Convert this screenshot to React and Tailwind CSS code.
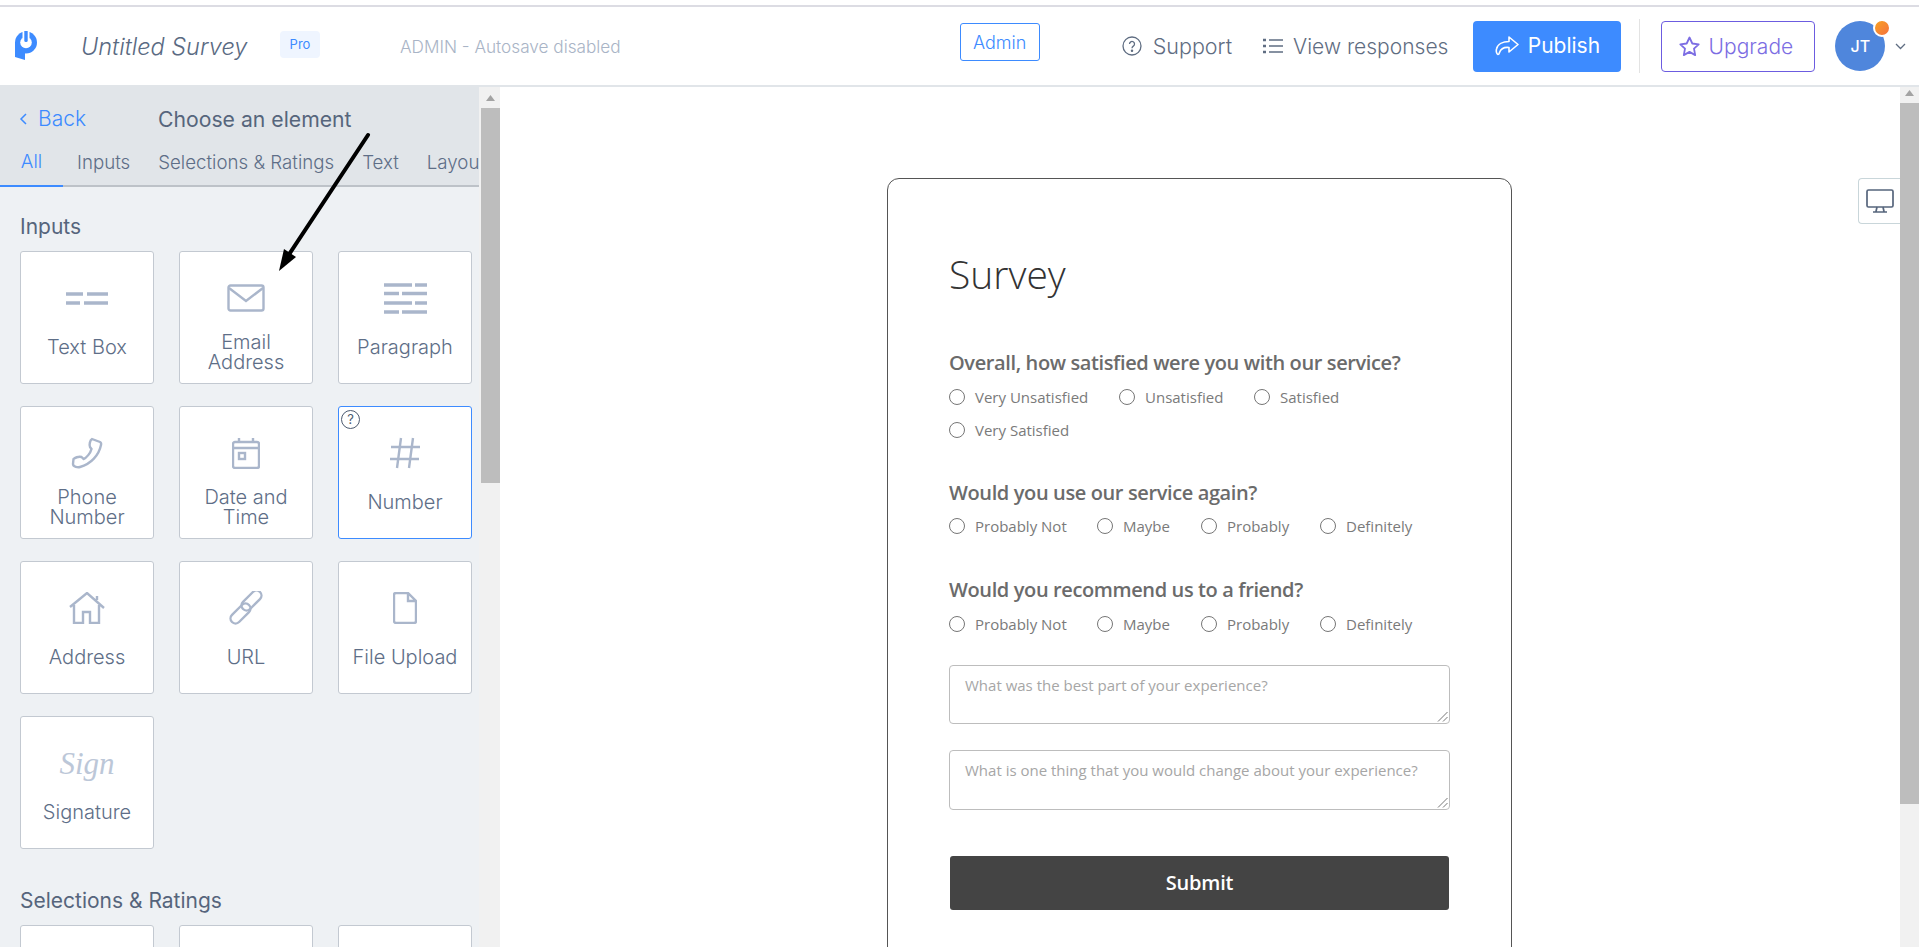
import React from "react";

const UI = "font-['Inter',sans-serif]";
const FORM = "font-['Open_Sans',sans-serif]";

const S = ({ w = 40, h = 40, vb = "0 0 40 40", children, className = "text-[#aab6cb]", sw = 2.400 }) => (
  <svg width={w} height={h} viewBox={vb} fill="none" stroke="currentColor" strokeWidth={sw} className={className}>{children}</svg>
);

const icons = {
  text: (
    <S vb="0 0 42 13" w={42} h={13} sw={3.400}>
      <path d="M0 2h17M21 2h21M0 11h14M18 11h24" />
    </S>
  ),
  email: (
    <S w={38} h={28} vb="0 0 38 28">
      <rect x="1.500" y="1.500" width="35" height="25" rx="2" />
      <path d="M2 4l17 13L36 4" />
    </S>
  ),
  para: (
    <S w={43} h={31} vb="0 0 43 31" sw={3.400}>
      <path d="M0 2h28M31 2h12M0 10.500h15M18 10.500h25M0 20h28M31 20h12M0 29h15M18 29h25" />
    </S>
  ),
  phone: (
    <S w={32} h={32} vb="0 0 32 32">
      <path d="M21 2l8 3c1 .5 1.500 1 1 3-2 10-10 19-21 22-2 .5-7 0-7-3l.500-5c1-1 5-3 8-2l2 2c3-1 7-6 8-10l-1.500-2c-1-2 0-7 2-8z" />
    </S>
  ),
  date: (
    <S w={28} h={32} vb="0 0 28 32">
      <rect x="1" y="5" width="26" height="26" rx="2" />
      <path d="M1 11h26M7 1v5M21 1v5" />
      <rect x="7" y="16" width="6" height="6" />
    </S>
  ),
  number: (
    <S w={32} h={32} vb="0 0 32 32">
      <path d="M12 1L8 31M24 1l-4 30M2 10h29M1 22h29" />
    </S>
  ),
  address: (
    <S w={36} h={32} vb="0 0 36 32">
      <path d="M1 15L18 1l17 15M5 13v18h9V20h7v11h9V13M28 8V4" />
    </S>
  ),
  url: (
    <S w={34} h={34} vb="0 0 34 34">
      <rect x="17.500" y="-2.500" width="10" height="24" rx="5" transform="rotate(45 22.500 9.500)" />
      <rect x="6.500" y="10.500" width="10" height="24" rx="5" transform="rotate(45 11.500 22.500)" />
    </S>
  ),
  file: (
    <S w={24} h={32} vb="0 0 24 32">
      <path d="M1 3a2 2 0 0 1 2-2h12l8 8v20a2 2 0 0 1-2 2H3a2 2 0 0 1-2-2zM15 1v8h8" />
    </S>
  ),
  sign: <span className="font-['Liberation_Serif',serif] italic text-[31px] leading-none text-[#bcc7d8]">Sign</span>,
};

function Card({ icon, label, active }) {
  const two = label && label.includes("\n");
  return (
    <div
      className={`relative h-[133px] rounded-[3px] border bg-white flex flex-col items-center ${
        active ? "border-[#3d8bff]" : "border-[#c3c9d1]"
      }`}
    >
      {active && (
        <span className="absolute left-[2px] top-[3px] w-[19px] h-[19px] rounded-full border border-[#4c5a70] flex items-center justify-center text-[13px] leading-none text-[#4c5a70]">
          ?
        </span>
      )}
      <div className="h-[76px] w-full flex items-end justify-center shrink-0 pb-[10px]">
        <div className="h-[40px] flex items-center justify-center">{icon}</div>
      </div>
      <div className="flex-1 flex items-start justify-center w-full">
        <div className={`text-center text-[20px] leading-[20px] font-light text-[#5e6e87] whitespace-pre-line ${two ? "mt-[4px]" : "mt-[9px]"}`}>
          {label}
        </div>
      </div>
    </div>
  );
}

function Radio({ label, cls = "" }) {
  return (
    <label className={`flex items-center ${cls}`}>
      <span className="w-[16px] h-[16px] rounded-full border border-[#767676] bg-white mr-[10px] shrink-0" />
      <span className="text-[15px] leading-[20px] text-[#7a7a7a] whitespace-nowrap">{label}</span>
    </label>
  );
}

function Question({ q, className = "", children }) {
  return (
    <div className={className}>
      <div className="text-[20px] leading-[28px] font-semibold text-[#6b6b6b] tracking-[-0.38px]">{q}</div>
      {children}
    </div>
  );
}

function Area({ placeholder, className = "" }) {
  return (
    <div className={`relative rounded-[4px] border border-[#bdbdbd] bg-white px-[15px] pt-[7px] ${className}`}>
      <span className="text-[15px] leading-[20px] text-[#a6a6a6] whitespace-nowrap">{placeholder}</span>
      <svg width="11" height="11" viewBox="0 0 11 11" className="absolute right-[1px] bottom-[1px]" stroke="#777" strokeWidth="1" fill="none">
        <path d="M1 10.500L10.500 1M6 10.500L10.500 6" />
      </svg>
    </div>
  );
}

function Scrollbar({ className = "", arrowClass, thumbClass }) {
  return (
    <div className={`shrink-0 bg-[#f1f1f1] flex flex-col items-center ${className}`}>
      <svg width="9" height="6" viewBox="0 0 9 6" className={`mb-[7px] shrink-0 ${arrowClass}`}>
        <path d="M4.500 0L9 6H0z" fill="#a3a3a3" />
      </svg>
      <div className={`w-full bg-[#bdbdbd] ${thumbClass}`} />
    </div>
  );
}

export default function App() {
  return (
    <div className={`relative h-[947px] w-full overflow-hidden bg-white flex flex-col ${UI}`}>
      <div className="h-[7px] shrink-0 bg-white border-b-2 border-[#dcdce3]" />
      <header className="h-[80px] shrink-0 border-b-2 border-[#e1e5e9] bg-white flex items-center pl-[15px]">
        <svg width="22" height="30" viewBox="0 0 22 30" className="shrink-0 -mt-[1px]">
          <path d="M0 11h10v18L0 26z" fill="#3d8bff" />
          <circle cx="11" cy="11.500" r="11" fill="#3d8bff" />
          <circle cx="11" cy="11.500" r="5.800" fill="#fff" />
          <rect x="7.500" y="-1" width="7" height="8" fill="#fff" />
          <rect x="9.300" y="-1" width="3.400" height="12" rx="1.500" fill="#3d8bff" />
        </svg>
        <div className="ml-[44px] mt-[2px] w-[199px] text-[23.500px] font-light italic text-[#5a6a82] whitespace-nowrap">Untitled Survey</div>
        <div className="w-[40px] h-[27px] rounded-[4px] bg-[#eff5ff] text-[#3d8bff] text-[13px] flex items-center justify-center -mt-[3px]">Pro</div>
        <div className="ml-[80px] mt-[1px] text-[17.200px] font-light text-[#a9b4c6] whitespace-nowrap">ADMIN - Autosave disabled</div>
        <div className="ml-[339px] w-[80px] h-[38px] rounded-[3px] border border-[#3d8bff] text-[#3d8bff] text-[18px] font-light flex items-center justify-center -mt-[8px]">Admin</div>
        <svg width="20" height="20" viewBox="0 0 20 20" className="ml-[82px] shrink-0 text-[#5f6d82]" fill="none" stroke="currentColor" strokeWidth="1.300">
          <circle cx="10" cy="10" r="9" />
          <path d="M7.500 8a2.500 2.500 0 1 1 3.800 2.100c-.9.600-1.300 1-1.300 2.100" />
          <circle cx="10" cy="14.800" r=".6" fill="currentColor" />
        </svg>
        <span className="ml-[11px] mt-[1px] text-[21.500px] font-light text-[#5f6d82]">Support</span>
        <svg width="20" height="16" viewBox="0 0 20 16" className="ml-[31px] shrink-0 text-[#5f6d82]" fill="none" stroke="currentColor" strokeWidth="1.500">
          <path d="M6 2h14M6 8h14M6 14h14" />
          <path d="M0 2h3M0 8h3M0 14h3" strokeWidth="2.500" />
        </svg>
        <span className="ml-[10px] mt-[1px] text-[21px] font-light text-[#5f6d82] whitespace-nowrap">View responses</span>
        <div className="ml-[25px] w-[148px] h-[51px] rounded-[4px] bg-[#3d8bff] text-white text-[21px] flex items-center justify-center gap-[9px]">
          <svg width="24" height="20" viewBox="0 0 24 20" fill="none" stroke="currentColor" strokeWidth="1.600" strokeLinejoin="round">
            <path d="M14 1l9 7.500-9 7.500v-4.500c-5-.5-8 .5-9.500 5-.3 1-.5 2-1.500 2C1.500 18 1 15 1.500 13 2.500 8 8 5.500 14 5.500z" />
          </svg>
          Publish
        </div>
        <div className="ml-[18px] w-px h-[54px] bg-[#e3e3e3]" />
        <div className="ml-[21px] w-[154px] h-[51px] rounded-[4px] border border-[#6c5ce0] text-[#7c6de3] text-[21px] font-light flex items-center justify-center gap-[9px] pt-[1px] pr-[5px]">
          <svg width="21" height="21" viewBox="0 0 21 21" fill="none" stroke="currentColor" strokeWidth="1.800" strokeLinejoin="round">
            <path d="M10.500 1.500l2.800 6 6.400.8-4.700 4.400 1.200 6.400-5.700-3.200-5.700 3.200 1.200-6.400L1.300 8.300l6.400-.8z" />
          </svg>
          Upgrade
        </div>
        <div className="relative ml-[20px] w-[50px] h-[50px] rounded-full bg-[#4f86dc] text-white text-[16px] font-medium flex items-center justify-center">
          JT
          <span className="absolute -right-[6px] -top-[2px] w-[18px] h-[18px] rounded-full border-2 border-white bg-gradient-to-br from-[#f7a11e] to-[#f5703c]" />
        </div>
        <svg width="11" height="7" viewBox="0 0 11 7" className="ml-[10px] text-[#5f6d82]" fill="none" stroke="currentColor" strokeWidth="1.300">
          <path d="M1 1l4.500 4.500L10 1" />
        </svg>
      </header>

      <div className="flex-1 flex min-h-0">
        <aside className="w-[500px] shrink-0 flex bg-[#f1f1f1] overflow-hidden">
          <div className="w-[479px] shrink-0 mr-[2px] bg-[#eef1f4] flex flex-col overflow-hidden">
            <div className="h-[100px] shrink-0 bg-[#e1e5e9] border-b-2 border-[#bdc2c8] relative">
              <div className="flex items-center pl-[19px] pt-[19px] h-[44px]">
                <svg width="9" height="14" viewBox="0 0 9 14" className="text-[#3d8bff]" fill="none" stroke="currentColor" strokeWidth="1.500">
                  <path d="M7 2L2 7l5 5" />
                </svg>
                <span className="ml-[10px] text-[#3d8bff] text-[21px] font-light">Back</span>
                <span className="ml-[72px] mt-[3px] text-[#56657c] text-[21.200px] whitespace-nowrap">Choose an element</span>
              </div>
              <div className="absolute left-0 right-0 bottom-[-2px] h-[48px] flex items-center text-[18.700px] font-light text-[#5e6e87] whitespace-nowrap overflow-hidden">
                <span className="w-[63px] shrink-0 h-full flex items-center justify-center text-[#3d8bff] border-b-2 border-[#3d8bff]">All</span>
                <span className="ml-[14px]">Inputs</span>
                <span className="ml-[28px]">Selections &amp; Ratings</span>
                <span className="ml-[28px]">Text</span>
                <span className="ml-[28px]">Layout</span>
              </div>
            </div>
            <div className="px-[20px] flex-1">
              <div className="text-[21px] leading-[28px] text-[#56657c] mt-[26px] mb-[10px]">Inputs</div>
              <div className="grid grid-cols-3 gap-x-[25px] gap-y-[22px] w-[452px]">
                <Card icon={icons.text} label="Text Box" />
                <Card icon={icons.email} label={"Email\nAddress"} />
                <Card icon={icons.para} label="Paragraph" />
                <Card icon={icons.phone} label={"Phone\nNumber"} />
                <Card icon={icons.date} label={"Date and\nTime"} />
                <Card icon={icons.number} label="Number" active />
                <Card icon={icons.address} label="Address" />
                <Card icon={icons.url} label="URL" />
                <Card icon={icons.file} label="File Upload" />
                <Card icon={icons.sign} label="Signature" />
              </div>
              <div className="text-[21px] leading-[28px] text-[#56657c] mt-[38px] mb-[10px] whitespace-nowrap">Selections &amp; Ratings</div>
              <div className="grid grid-cols-3 gap-x-[25px] w-[452px]">
                <Card />
                <Card />
                <Card />
              </div>
            </div>
          </div>
          <Scrollbar className="w-[19px]" arrowClass="mt-[8px]" thumbClass="h-[375px]" />
        </aside>

        <main className={`relative flex-1 flex min-w-0 ${FORM}`}>
          <div className="flex-1 min-w-0 overflow-hidden pr-[1px]">
            <div className="mx-auto mt-[91px] w-[625px] h-[900px] rounded-[12px] border border-[#555] px-[61px] pt-[70px]">
              <h1 className="text-[39px] leading-[50px] text-[#333] font-light">Survey</h1>
              <Question q="Overall, how satisfied were you with our service?" className="mt-[50px]">
                <div className="flex mt-[8px] h-[24px]">
                  <Radio label="Very Unsatisfied" cls="w-[170px]" />
                  <Radio label="Unsatisfied" cls="w-[135px]" />
                  <Radio label="Satisfied" />
                </div>
                <div className="flex mt-[9px] h-[24px]">
                  <Radio label="Very Satisfied" />
                </div>
              </Question>
              <Question q="Would you use our service again?" className="mt-[37px]">
                <div className="flex mt-[7px] h-[24px]">
                  <Radio label="Probably Not" cls="w-[148px]" />
                  <Radio label="Maybe" cls="w-[104px]" />
                  <Radio label="Probably" cls="w-[119px]" />
                  <Radio label="Definitely" />
                </div>
              </Question>
              <Question q="Would you recommend us to a friend?" className="mt-[38px]">
                <div className="flex mt-[8px] h-[24px]">
                  <Radio label="Probably Not" cls="w-[148px]" />
                  <Radio label="Maybe" cls="w-[104px]" />
                  <Radio label="Probably" cls="w-[119px]" />
                  <Radio label="Definitely" />
                </div>
              </Question>
              <Area placeholder="What was the best part of your experience?" className="mt-[29px] h-[59px]" />
              <Area placeholder="What is one thing that you would change about your experience?" className="mt-[26px] h-[60px]" />
              <button className="mt-[46px] mx-[1px] block w-[499px] h-[54px] rounded-[3px] bg-[#444] text-white text-[20px] font-semibold tracking-[-0.2px]">
                Submit
              </button>
            </div>
          </div>
          <Scrollbar className="w-[19px]" arrowClass="mt-[3px]" thumbClass="h-[701px]" />
          <div className="absolute right-[19px] top-[91px] w-[42px] h-[46px] rounded-l-[4px] border border-r-0 border-[#c9d6da] bg-white flex items-center justify-center">
            <svg width="28" height="24" viewBox="0 0 28 24" className="text-[#56657c]" fill="none" stroke="currentColor" strokeWidth="1.700">
              <rect x="1" y="1" width="26" height="17" rx="1.500" />
              <path d="M11 18l-1 4.500M17 18l1 4.500M7 23h14" />
            </svg>
          </div>
        </main>
      </div>

      <svg className="absolute left-[270px] top-[130px] pointer-events-none" width="105" height="145" viewBox="270 130 105 145">
        <path d="M368 135L286 259" stroke="#000" strokeWidth="4" strokeLinecap="round" />
        <path d="M279 271l5-22 12 8z" fill="#000" />
      </svg>
    </div>
  );
}
